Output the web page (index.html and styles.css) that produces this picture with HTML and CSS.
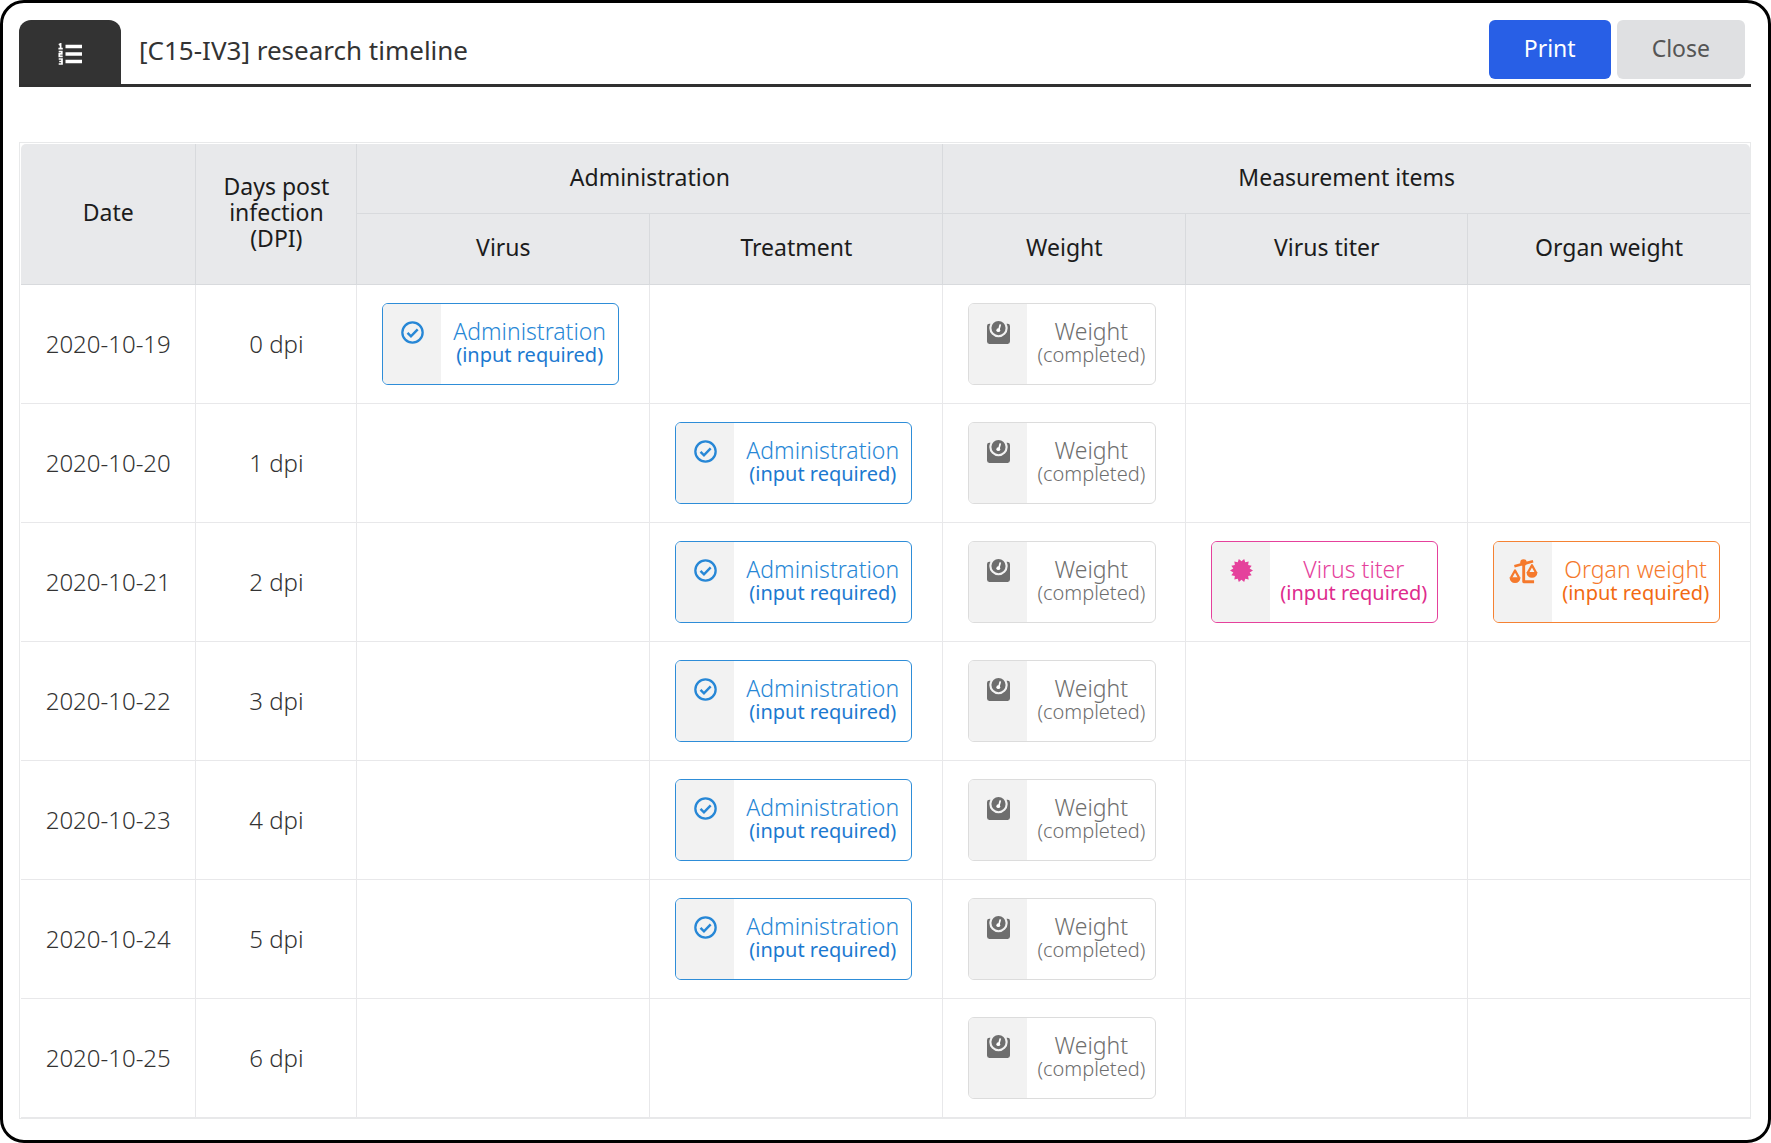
FILE: index.html
```html
<!DOCTYPE html>
<html lang="en">
<head>
<meta charset="utf-8">
<title>[C15-IV3] research timeline</title>
<link rel="stylesheet" href="styles.css">
</head>
<body>
<svg class="sprite" aria-hidden="true">
  <symbol id="i-check" viewBox="0 0 24 24">
    <circle cx="12" cy="12" r="10.6" fill="none" stroke="currentColor" stroke-width="2.4"/>
    <path d="M6.800 12.400l3.600 3.600 7-7.200" fill="none" stroke="currentColor" stroke-width="2.600"/>
  </symbol>
  <symbol id="i-scale" viewBox="0 0 24 24">
    <path d="M3.600 2.800H2.500Q0 2.800 0 5.300V21.500Q0 24 2.500 24h19q2.500 0 2.500-2.500V5.300q0-2.500-2.500-2.500h-1.100Q21.600 5.200 21.600 7.400A9.600 9.600 0 0 1 2.400 7.400Q2.400 5.200 3.600 2.800z" fill="currentColor"/>
    <circle cx="12" cy="7.400" r="7.400" fill="currentColor"/>
    <path d="M13.900 3.500l-1.600 6" stroke="#fff" stroke-width="1.800" fill="none"/>
    <circle cx="11.800" cy="9.600" r="2" fill="#fff"/>
  </symbol>
  <symbol id="i-burst" viewBox="0 0 24 24">
    <path fill="currentColor" d="M12 2.400L14.800 0l1.100 3.500 3.600-.9-.6 3.700 3.700.7-2.100 3L24 12l-3.500 2 2.100 3-3.700.7.6 3.700-3.600-.9-1.100 3.500-2.800-2.400L9.200 24l-1.100-3.500-3.600.9.600-3.700-3.700-.7 2.100-3L0 12l3.500-2-2.100-3 3.700-.7-.6-3.700 3.600.9L9.200 0z"/>
  </symbol>
  <symbol id="i-balance" viewBox="0 0 30 26">
    <g fill="none" stroke="currentColor" stroke-width="2.400" stroke-linejoin="round">
      <path d="M5.500 7.600L25 2.400" stroke-width="2.800"/>
      <path d="M15.200 4v19.600H26" stroke-width="3"/>
      <path d="M2 19.500L6.200 12l4.200 7.500M19.600 14l4.200-7.500L28 14"/>
    </g>
    <g fill="currentColor">
      <circle cx="15" cy="3.600" r="3.400"/>
      <path d="M.4 19h11.600q-.6 6-5.800 6t-5.800-6zM18 13.400h11.600q-.6 6-5.800 6t-5.800-6z"/>
    </g>
  </symbol>
</svg>

<main class="page">
  <header class="bar">
    <span class="tab">
      <svg class="tab-icon" viewBox="0 0 24 22" aria-hidden="true">
        <path d="M7.500 3.500H24M7.500 11H24M7.500 18.500H24" stroke="#fff" stroke-width="3.400"/>
        <path d="M.8 1.800L2.600.9v4.600M.4 5.600h4.400M.7 8.600h3.100v2.300H1.300v2.500h3.400M.7 16h3.300v5H.7M1.200 18.500h2.700" fill="none" stroke="#fff" stroke-width="1.700"/>
      </svg>
    </span>
    <h1 class="title">[C15-IV3] research timeline</h1>
    <div class="actions">
      <button type="button" class="btn btn-print">Print</button>
      <button type="button" class="btn btn-close">Close</button>
    </div>
  </header>

  <div class="frame">
    <table class="timeline">
      <colgroup>
        <col class="c-date"><col class="c-dpi"><col class="c-adm"><col class="c-adm"><col class="c-weight"><col class="c-titer"><col class="c-organ">
      </colgroup>
      <thead>
        <tr>
          <th rowspan="2" scope="col">Date</th>
          <th rowspan="2" scope="col">Days post infection (DPI)</th>
          <th colspan="2" scope="colgroup">Administration</th>
          <th colspan="3" scope="colgroup">Measurement items</th>
        </tr>
        <tr class="sub">
          <th scope="col">Virus</th>
          <th scope="col">Treatment</th>
          <th scope="col">Weight</th>
          <th scope="col">Virus titer</th>
          <th scope="col">Organ weight</th>
        </tr>
      </thead>
      <tbody>
        <tr>
          <td>2020-10-19</td><td>0 dpi</td>
          <td class="slot"><button type="button" class="card blue"><span class="ico"><svg><use href="#i-check"/></svg></span><span class="txt">Administration<small>(input required)</small></span></button></td>
          <td></td>
          <td class="slot"><button type="button" class="card grey"><span class="ico"><svg><use href="#i-scale"/></svg></span><span class="txt">Weight<small>(completed)</small></span></button></td>
          <td></td><td></td>
        </tr>
        <tr>
          <td>2020-10-20</td><td>1 dpi</td><td></td>
          <td class="slot"><button type="button" class="card blue"><span class="ico"><svg><use href="#i-check"/></svg></span><span class="txt">Administration<small>(input required)</small></span></button></td>
          <td class="slot"><button type="button" class="card grey"><span class="ico"><svg><use href="#i-scale"/></svg></span><span class="txt">Weight<small>(completed)</small></span></button></td>
          <td></td><td></td>
        </tr>
        <tr>
          <td>2020-10-21</td><td>2 dpi</td><td></td>
          <td class="slot"><button type="button" class="card blue"><span class="ico"><svg><use href="#i-check"/></svg></span><span class="txt">Administration<small>(input required)</small></span></button></td>
          <td class="slot"><button type="button" class="card grey"><span class="ico"><svg><use href="#i-scale"/></svg></span><span class="txt">Weight<small>(completed)</small></span></button></td>
          <td class="slot"><button type="button" class="card pink"><span class="ico"><svg><use href="#i-burst"/></svg></span><span class="txt">Virus titer<small>(input required)</small></span></button></td>
          <td class="slot"><button type="button" class="card orange"><span class="ico"><svg class="wide"><use href="#i-balance"/></svg></span><span class="txt">Organ weight<small>(input required)</small></span></button></td>
        </tr>
        <tr>
          <td>2020-10-22</td><td>3 dpi</td><td></td>
          <td class="slot"><button type="button" class="card blue"><span class="ico"><svg><use href="#i-check"/></svg></span><span class="txt">Administration<small>(input required)</small></span></button></td>
          <td class="slot"><button type="button" class="card grey"><span class="ico"><svg><use href="#i-scale"/></svg></span><span class="txt">Weight<small>(completed)</small></span></button></td>
          <td></td><td></td>
        </tr>
        <tr>
          <td>2020-10-23</td><td>4 dpi</td><td></td>
          <td class="slot"><button type="button" class="card blue"><span class="ico"><svg><use href="#i-check"/></svg></span><span class="txt">Administration<small>(input required)</small></span></button></td>
          <td class="slot"><button type="button" class="card grey"><span class="ico"><svg><use href="#i-scale"/></svg></span><span class="txt">Weight<small>(completed)</small></span></button></td>
          <td></td><td></td>
        </tr>
        <tr>
          <td>2020-10-24</td><td>5 dpi</td><td></td>
          <td class="slot"><button type="button" class="card blue"><span class="ico"><svg><use href="#i-check"/></svg></span><span class="txt">Administration<small>(input required)</small></span></button></td>
          <td class="slot"><button type="button" class="card grey"><span class="ico"><svg><use href="#i-scale"/></svg></span><span class="txt">Weight<small>(completed)</small></span></button></td>
          <td></td><td></td>
        </tr>
        <tr>
          <td>2020-10-25</td><td>6 dpi</td><td></td><td></td>
          <td class="slot"><button type="button" class="card grey"><span class="ico"><svg><use href="#i-scale"/></svg></span><span class="txt">Weight<small>(completed)</small></span></button></td>
          <td></td><td></td>
        </tr>
      </tbody>
    </table>
  </div>
</main>
</body>
</html>
```
FILE: styles.css
```css
* { box-sizing: border-box; }

body {
  margin: 0;
  background: #fff;
  color: #333;
  font-family: "Noto Sans", "Open Sans", sans-serif;
}

button { font-family: inherit; cursor: pointer; }

.sprite { display: none; }

.page {
  min-height: 100vh;
  padding: 17px 17px 20px 16px;
  border: 3px solid #000;
  border-radius: 24px;
}

/* Title bar */
.bar {
  display: flex;
  align-items: flex-start;
  border-bottom: 3px solid #303030;
}

.tab {
  display: flex;
  align-items: center;
  justify-content: center;
  width: 102px;
  height: 64px;
  padding-top: 4px;
  border-radius: 12px 12px 0 0;
  background: #333;
}

.tab-icon { width: 24px; height: 22px; }

.title {
  flex: 1;
  margin: 0 0 0 18px;
  font-size: 26px;
  line-height: 60px;
  font-weight: 400;
}

.actions {
  display: flex;
  gap: 6px;
  padding-right: 6px;
}

.btn {
  height: 59px;
  padding: 0 35px 4px;
  border: 0;
  border-radius: 6px;
  font-size: 23px;
  line-height: 32px;
}

.btn-print { background: #285fe6; color: #fff; }
.btn-close { background: #dfe0e2; color: #555; }

/* Timeline grid */
.frame {
  margin-top: 55px;
  padding: 1px 0 0 1px;
  border: 1px solid #e8e9ea;
}

.timeline {
  width: 100%;
  table-layout: fixed;
  border-collapse: separate;
  border-spacing: 0;
}

.c-date { width: 10.15%; }
.c-dpi { width: 9.3%; }
.c-adm { width: 16.95%; }
.c-weight { width: 14.05%; }
.c-titer { width: 16.3%; }
.c-organ { width: 16.3%; }

th {
  height: 70px;
  padding: 0 24px 4px;
  border: solid #d8dadd;
  border-width: 0 1px 1px 0;
  background: #e8e9eb;
  color: #1c1c1c;
  font-size: 23px;
  line-height: 26px;
  font-weight: 400;
}

.sub th { height: 71px; }

th:first-child { border-radius: 5px 0 0 0; }
.sub th:first-child { border-radius: 0; }
tr:first-child th:last-child { border-radius: 0 5px 0 0; }

td {
  height: 119px;
  padding: 0 0 1px;
  border: solid #e8e8ea;
  border-width: 0 1px 1px 0;
  font-size: 24px;
  line-height: 30px;
  font-weight: 300;
  text-align: center;
}

tr > :last-child { border-right: 0; }

.slot { padding: 0 0 0 25px; text-align: left; }

/* Task cards */
.card {
  display: flex;
  height: 82px;
  padding: 0;
  border: 1px solid;
  border-radius: 6px;
  overflow: hidden;
  background: #fff;
  font-size: 23px;
  line-height: 23px;
  font-weight: 300;
}

.ico {
  display: flex;
  justify-content: center;
  width: 58px;
  height: 100%;
  padding-top: 17px;
  background: #f2f2f2;
}

.ico svg { width: 23px; height: 23px; }
.ico .wide { width: 29px; height: 25px; }

.txt { padding: 16px 10px 0; }
.blue .txt { padding: 16px 12px 0; }

.txt small {
  display: block;
  font-size: 20px;
  font-weight: 400;
}

.blue { border-color: #2e8dd8; color: #2787d6; }
.blue small { color: #1c79d0; }
.grey { border-color: #dcdcdc; color: #6e6e6e; }
.grey small { font-weight: 300; }
.pink { border-color: #e5419c; color: #e5419c; }
.pink small { color: #de2b8d; }
.orange { border-color: #f58233; color: #f5792c; }
.orange small { color: #f26a12; }
```
